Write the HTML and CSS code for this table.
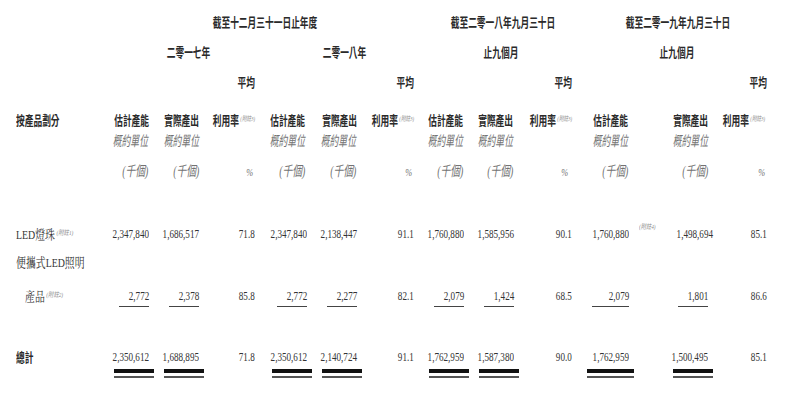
FILE: index.html
```html
<!DOCTYPE html>
<html lang="zh-Hant">
<head>
<meta charset="utf-8">
<title>按產品劃分產能</title>
<link rel="stylesheet" href="styles.css">
</head>
<body>
<div class="sheet">
  <div class="row r1">
    <div class="cell"></div>
    <div class="cell c g-a pad12"><span class="t h">截至十二月三十一日止年度</span></div>
    <div class="cell c g-b pad19"><span class="t h">截至二零一八年九月三十日</span></div>
    <div class="cell c g-c pad18"><span class="t h">截至二零一九年九月三十日</span></div>
  </div>
  <div class="row r2">
    <div class="cell"></div>
    <div class="cell c s-1 pad17"><span class="t h">二零一七年</span></div>
    <div class="cell c s-2 pad21"><span class="t h">二零一八年</span></div>
    <div class="cell c s-3 pad17"><span class="t h">止九個月</span></div>
    <div class="cell c s-4 pad16"><span class="t h">止九個月</span></div>
  </div>
  <div class="row r3">
    <div class="cell r at4"><span class="t h">平均</span></div>
    <div class="cell r at7"><span class="t h">平均</span></div>
    <div class="cell r at10"><span class="t h">平均</span></div>
    <div class="cell r at13"><span class="t h">平均</span></div>
  </div>
  <div class="row r4">
    <div class="cell l lab"><span class="t h">按產品劃分</span></div>
    <div class="cell r"><span class="t h">估計產能</span></div>
    <div class="cell r"><span class="t h">實際產出</span></div>
    <div class="cell r"><span class="t h">利用率<span class="fn">(附註3)</span></span></div>
    <div class="cell r m2"><span class="t h">估計產能</span></div>
    <div class="cell r"><span class="t h">實際產出</span></div>
    <div class="cell r"><span class="t h">利用率<span class="fn">(附註3)</span></span></div>
    <div class="cell r m1"><span class="t h">估計產能</span></div>
    <div class="cell r m1"><span class="t h">實際產出</span></div>
    <div class="cell r"><span class="t h">利用率<span class="fn">(附註3)</span></span></div>
    <div class="cell r m1"><span class="t h">估計產能</span></div>
    <div class="cell r"><span class="t h">實際產出</span></div>
    <div class="cell r m2"><span class="t h">利用率<span class="fn">(附註3)</span></span></div>
  </div>
  <div class="row r5">
    <div class="cell"></div>
    <div class="cell r m1"><span class="t i">概約單位</span></div>
    <div class="cell r"><span class="t i">概約單位</span></div>
    <div class="cell"></div>
    <div class="cell r m2"><span class="t i">概約單位</span></div>
    <div class="cell r m1"><span class="t i">概約單位</span></div>
    <div class="cell"></div>
    <div class="cell r m1"><span class="t i">概約單位</span></div>
    <div class="cell r m1"><span class="t i">概約單位</span></div>
    <div class="cell"></div>
    <div class="cell r m1"><span class="t i">概約單位</span></div>
    <div class="cell r"><span class="t i">概約單位</span></div>
  </div>
  <div class="row r6">
    <div class="cell"></div>
    <div class="cell r m1"><span class="t i p">(千個)</span></div>
    <div class="cell r"><span class="t i p">(千個)</span></div>
    <div class="cell r m2"><span class="t i pc">%</span></div>
    <div class="cell r m2"><span class="t i p">(千個)</span></div>
    <div class="cell r m1"><span class="t i p">(千個)</span></div>
    <div class="cell r m2"><span class="t i pc">%</span></div>
    <div class="cell r m1"><span class="t i p">(千個)</span></div>
    <div class="cell r m1"><span class="t i p">(千個)</span></div>
    <div class="cell r m4"><span class="t i pc">%</span></div>
    <div class="cell r m1"><span class="t i p">(千個)</span></div>
    <div class="cell r"><span class="t i p">(千個)</span></div>
    <div class="cell r m2"><span class="t i pc">%</span></div>
  </div>
  <div class="row r7">
    <div class="cell l lab"><span class="t lb">LED燈珠<span class="fn">(附註1)</span></span></div>
    <div class="cell r"><span class="t n">2,347,840</span></div>
    <div class="cell r"><span class="t n">1,686,517</span></div>
    <div class="cell r"><span class="t n">71.8</span></div>
    <div class="cell r"><span class="t n">2,347,840</span></div>
    <div class="cell r"><span class="t n">2,138,447</span></div>
    <div class="cell r"><span class="t n">91.1</span></div>
    <div class="cell r"><span class="t n">1,760,880</span></div>
    <div class="cell r"><span class="t n">1,585,956</span></div>
    <div class="cell r"><span class="t n">90.1</span></div>
    <div class="cell r"><span class="t n">1,760,880</span></div>
    <div class="cell sb"><span class="t fnx">(附註4)</span><span class="t n">1,498,694</span></div>
    <div class="cell r"><span class="t n">85.1</span></div>
  </div>
  <div class="row r8">
    <div class="cell l lab"><span class="t lb">便攜式LED照明</span></div>
  </div>
  <div class="row r9">
    <div class="cell l lab ind"><span class="t lb">產品<span class="fn">(附註2)</span></span></div>
    <div class="cell r ul"><span class="t n">2,772</span></div>
    <div class="cell r ul"><span class="t n">2,378</span></div>
    <div class="cell r"><span class="t n">85.8</span></div>
    <div class="cell r ul"><span class="t n">2,772</span></div>
    <div class="cell r ul"><span class="t n">2,277</span></div>
    <div class="cell r"><span class="t n">82.1</span></div>
    <div class="cell r ul"><span class="t n">2,079</span></div>
    <div class="cell r ul"><span class="t n">1,424</span></div>
    <div class="cell r"><span class="t n">68.5</span></div>
    <div class="cell r ul wide"><span class="t n">2,079</span></div>
    <div class="cell r ul"><span class="t n">1,801</span></div>
    <div class="cell r"><span class="t n">86.6</span></div>
  </div>
  <div class="row r10">
    <div class="cell l lab"><span class="t h">總計</span></div>
    <div class="cell r"><span class="t n">2,350,612</span></div>
    <div class="cell r"><span class="t n">1,688,895</span></div>
    <div class="cell r"><span class="t n">71.8</span></div>
    <div class="cell r"><span class="t n">2,350,612</span></div>
    <div class="cell r"><span class="t n">2,140,724</span></div>
    <div class="cell r"><span class="t n">91.1</span></div>
    <div class="cell r"><span class="t n">1,762,959</span></div>
    <div class="cell r"><span class="t n">1,587,380</span></div>
    <div class="cell r"><span class="t n">90.0</span></div>
    <div class="cell r"><span class="t n">1,762,959</span></div>
    <div class="cell r"><span class="t n">1,500,495</span></div>
    <div class="cell r"><span class="t n">85.1</span></div>
  </div>
  <div class="row r11">
    <div class="cell"></div>
    <div class="cell r"><div class="dbl"></div></div>
    <div class="cell r"><div class="dbl"></div></div>
    <div class="cell"></div>
    <div class="cell r"><div class="dbl"></div></div>
    <div class="cell r"><div class="dbl"></div></div>
    <div class="cell"></div>
    <div class="cell r"><div class="dbl"></div></div>
    <div class="cell r"><div class="dbl"></div></div>
    <div class="cell"></div>
    <div class="cell r"><div class="dbl wide"></div></div>
    <div class="cell r"><div class="dbl"></div></div>
  </div>
</div>
</body>
</html>
```

FILE: styles.css
```css
* {
  box-sizing: border-box;
  margin: 0;
  padding: 0;
}

html, body {
  background: #ffffff;
}

body {
  font-family: "Liberation Serif", "Noto Serif CJK TC", "Noto Sans CJK TC", serif;
  color: #333333;
}

.sheet {
  width: 800px;
  padding-top: 12px;
}

.row {
  display: grid;
  grid-template-columns: 105px 44px 50px 56px 52px 50px 57px 50px 50px 58px 57px 79px 59px 1fr;
  height: 20px;
}

.r2 { margin-top: 10px; }
.r3 { margin-top: 10px; }
.r4 { margin-top: 17px; }
.r5 { margin-top: 3px; }
.r6 { margin-top: 10px; }
.r7 { margin-top: 41px; }
.r8 { margin-top: 10px; }
.r9 { margin-top: 12px; }
.r10 { margin-top: 42px; }
.r11 { margin-top: 2px; height: 9px; }

.cell {
  display: flex;
  align-items: center;
  min-width: 0;
  white-space: nowrap;
}

.r { justify-content: flex-end; }
.c { justify-content: center; }
.l { justify-content: flex-start; }
.sb { justify-content: space-between; padding-left: 10px; }

.t {
  display: inline-block;
  flex-shrink: 0;
  line-height: 20px;
}

.r .t { transform-origin: 100% 50%; }
.c .t { transform-origin: 50% 50%; }
.l .t { transform-origin: 0 50%; }
.sb .t { transform-origin: 100% 50%; }

/* column spans for grouped headings */
.g-a { grid-column: 2 / 8; }
.g-b { grid-column: 8 / 11; }
.g-c { grid-column: 11 / 14; }
.s-1 { grid-column: 2 / 5; }
.s-2 { grid-column: 5 / 8; }
.s-3 { grid-column: 8 / 11; }
.s-4 { grid-column: 11 / 14; }
.at4 { grid-column: 4; }
.at7 { grid-column: 7; }
.at10 { grid-column: 10; }
.at13 { grid-column: 13; }

.pad12 { padding-left: 12px; }
.pad16 { padding-left: 16px; }
.pad17 { padding-left: 17px; }
.pad18 { padding-left: 18px; }
.pad19 { padding-left: 19px; }
.pad21 { padding-left: 21px; }

.m1 { padding-right: 1px; }
.m2 { padding-right: 2px; }
.m4 { padding-right: 4px; }

.lab { padding-left: 16px; }
.ind { padding-left: 25px; }

/* text styles */
.h {
  font-family: "Noto Sans CJK TC", sans-serif;
  font-weight: 700;
  font-size: 13px;
  color: #2a2a2a;
  transform: scaleX(0.67);
}

.n {
  font-family: "Liberation Serif", serif;
  font-size: 13px;
  color: #333333;
  transform: scaleX(0.7);
}

.i {
  font-family: "Liberation Serif", "Noto Sans CJK TC", serif;
  font-style: italic;
  font-size: 14px;
  color: #737373;
  transform: scaleX(0.63);
}

.i.p { transform: scaleX(0.7); }
.i.pc { font-size: 11px; transform: scaleX(0.75); }

.lb {
  font-family: "Liberation Serif", "Noto Serif CJK TC", "Noto Sans CJK TC", serif;
  font-size: 13px;
  color: #333333;
  transform: scaleX(0.76);
}

.fn {
  font-family: "Liberation Serif", "Noto Sans CJK TC", serif;
  font-style: italic;
  font-weight: 400;
  font-size: 7px;
  color: #8a8a8a;
  vertical-align: 4px;
  margin-left: 2px;
}

.fnx {
  align-self: flex-start;
  font-family: "Liberation Serif", "Noto Sans CJK TC", serif;
  font-style: italic;
  font-size: 7px;
  line-height: 9px;
  color: #8a8a8a;
  transform: scaleX(0.75);
  transform-origin: 0 50%;
}

.sb .fnx { transform-origin: 0 50%; }

/* single rule under sub-total figures */
.ul {
  background: linear-gradient(#444444, #444444) no-repeat right bottom / 30px 1px;
}

.ul.wide {
  background-size: 37px 1px;
}

/* double rule under totals */
.dbl {
  width: 40px;
  height: 9px;
  margin-right: -5px;
  border-top: 4px solid #111111;
  border-bottom: 2px solid #555555;
  flex-shrink: 0;
}

.dbl.wide {
  width: 47px;
}
```
